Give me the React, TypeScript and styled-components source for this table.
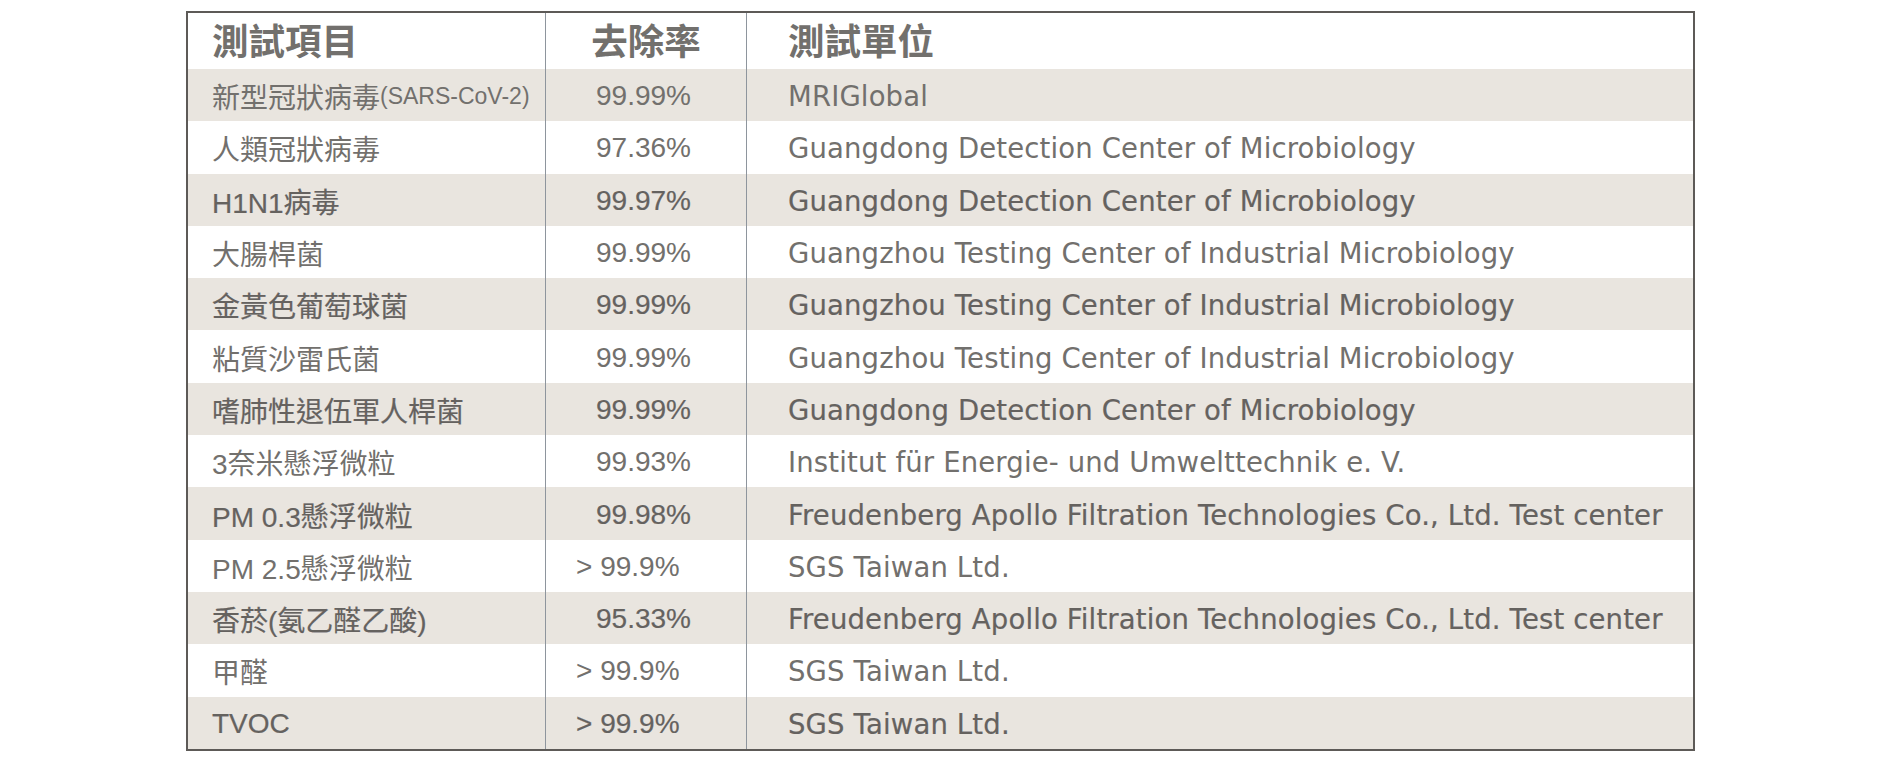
import React from "react";
import styled, { createGlobalStyle } from "styled-components";

const Global = createGlobalStyle`
  html, body { margin: 0; padding: 0; background: #ffffff; }
  body { font-family: "Liberation Sans", "Noto Sans CJK TC", sans-serif; }
`;

const Page = styled.div`
  padding: 11px 0 0 186px;
  width: 1900px;
  height: 773px;
  box-sizing: border-box;
`;

const Table = styled.div`
  width: 1509px;
  border: 2px solid #5d5a57;
  box-sizing: border-box;
  display: flex;
  flex-direction: column;
`;

const Row = styled.div<{ $shaded?: boolean; $header?: boolean }>`
  display: grid;
  grid-template-columns: 358px 201px 1fr;
  height: ${(p) => (p.$header ? "56px" : "52.3px")};
  background: ${(p) => (p.$shaded ? "#e9e5df" : "#ffffff")};
`;

const Cell = styled.div<{
  $divider?: boolean;
  $pad?: number;
  $center?: boolean;
  $header?: boolean;
  $strong?: boolean;
  $wide?: boolean;
}>`
  display: flex;
  align-items: center;
  justify-content: ${(p) => (p.$center ? "center" : "flex-start")};
  box-sizing: border-box;
  border-right: ${(p) => (p.$divider ? "1px solid #8e959d" : "none")};
  padding-left: ${(p) => p.$pad ?? 0}px;
  padding-top: ${(p) => (p.$header ? 0 : 2)}px;
  padding-bottom: ${(p) => (p.$header ? 10 : 0)}px;
  font-family: ${(p) =>
    p.$wide
      ? '"DejaVu Sans", "Noto Sans CJK TC", sans-serif'
      : '"Liberation Sans", "Noto Sans CJK TC", sans-serif'};
  font-size: ${(p) => (p.$header ? "36.5px" : p.$wide ? "27.5px" : "28px")};
  letter-spacing: ${(p) => (p.$wide ? "0.15px" : "0")};
  font-weight: ${(p) => (p.$header ? 700 : 400)};
  color: ${(p) => (p.$strong ? "#65625f" : "#72706d")};
  white-space: nowrap;
  -webkit-text-stroke: ${(p) => (p.$strong ? "0.2px #65625f" : "0")};
`;

const Small = styled.span`
  font-size: 23px;
`;

type Item = { name: React.ReactNode; rate: string; gt?: boolean; lab: string };

const items: Item[] = [
  { name: <>新型冠狀病毒<Small>(SARS-CoV-2)</Small></>, rate: "99.99%", lab: "MRIGlobal" },
  { name: "人類冠狀病毒", rate: "97.36%", lab: "Guangdong Detection Center of Microbiology" },
  { name: "H1N1病毒", rate: "99.97%", lab: "Guangdong Detection Center of Microbiology" },
  { name: "大腸桿菌", rate: "99.99%", lab: "Guangzhou Testing Center of Industrial Microbiology" },
  { name: "金黃色葡萄球菌", rate: "99.99%", lab: "Guangzhou Testing Center of Industrial Microbiology" },
  { name: "粘質沙雷氏菌", rate: "99.99%", lab: "Guangzhou Testing Center of Industrial Microbiology" },
  { name: "嗜肺性退伍軍人桿菌", rate: "99.99%", lab: "Guangdong Detection Center of Microbiology" },
  { name: "3奈米懸浮微粒", rate: "99.93%", lab: "Institut für Energie- und Umwelttechnik e. V." },
  { name: "PM 0.3懸浮微粒", rate: "99.98%", lab: "Freudenberg Apollo Filtration Technologies Co., Ltd. Test center" },
  { name: "PM 2.5懸浮微粒", rate: "> 99.9%", gt: true, lab: "SGS Taiwan Ltd." },
  { name: "香菸(氨乙醛乙酸)", rate: "95.33%", lab: "Freudenberg Apollo Filtration Technologies Co., Ltd. Test center" },
  { name: "甲醛", rate: "> 99.9%", gt: true, lab: "SGS Taiwan Ltd." },
  { name: "TVOC", rate: "> 99.9%", gt: true, lab: "SGS Taiwan Ltd." },
];

export default function App() {
  return (
    <>
      <Global />
      <Page>
        <Table>
          <Row $header>
            <Cell $header $divider $pad={24}>測試項目</Cell>
            <Cell $header $divider $center>去除率</Cell>
            <Cell $header $pad={41}>測試單位</Cell>
          </Row>
          {items.map((it, i) => {
            const shaded = i % 2 === 0;
            const strong = shaded && i > 0;
            return (
              <Row key={i} $shaded={shaded}>
                <Cell $divider $pad={24} $strong={strong}>{it.name}</Cell>
                <Cell $divider $pad={it.gt ? 30 : 50} $strong={strong}>{it.rate}</Cell>
                <Cell $pad={41} $wide $strong={strong}>{it.lab}</Cell>
              </Row>
            );
          })}
        </Table>
      </Page>
    </>
  );
}
